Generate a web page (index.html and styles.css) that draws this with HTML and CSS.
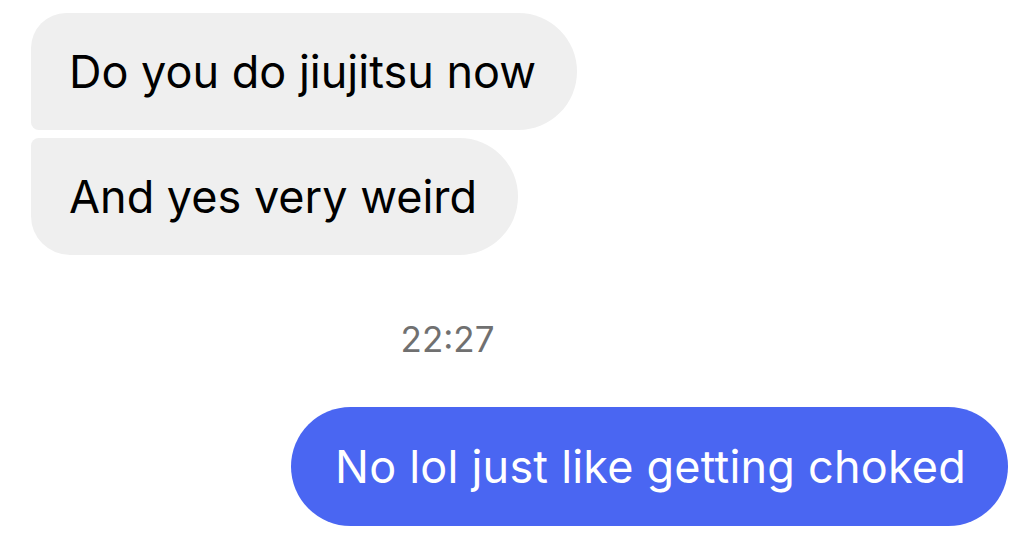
FILE: index.html
```html
<!DOCTYPE html>
<html lang="en">
<head>
  <meta charset="UTF-8">
  <meta name="viewport" content="width=device-width, initial-scale=1.0">
  <title>Chat</title>
  <link rel="stylesheet" href="styles.css">
</head>
<body>
  <div class="thread">
    <div class="msg incoming first">Do you do jiujitsu now</div>
    <div class="msg incoming last">And yes very weird</div>

    <div class="timestamp">22:27</div>

    <div class="msg outgoing">No lol just like getting choked</div>
  </div>
</body>
</html>
```
FILE: styles.css
```css
/* base */
* {
  margin: 0;
  padding: 0;
  box-sizing: border-box;
}

body {
  background-color: #ffffff;
  font-family: 'Inter', 'Liberation Sans', sans-serif;
  color: #000;
}

.thread {
  display: flex;
  flex-direction: column;
  padding: 13px 25px 0 31px;
}

.msg {
  font-size: 45px;
  line-height: 56px;
  padding: 31px 41px 30px 38px;
  white-space: nowrap;
}

.incoming {
  align-self: flex-start;
  background-color: #efefef;
}

.incoming.first {
  border-radius: 36px 60px 60px 8px;
}

.incoming.last {
  margin-top: 8px;
  border-radius: 8px 60px 60px 40px;
}

.timestamp {
  width: 833px;
  text-align: center;
  margin-top: 64px;
  font-size: 35px;
  line-height: 40px;
  color: #707070;
}

.outgoing {
  align-self: flex-end;
  margin-top: 48px;
  background-color: #4a66f2;
  color: #fff;
  border-radius: 60px;
  padding: 32px 42px 31px 44px;
  letter-spacing: 0.2px;
}
```
